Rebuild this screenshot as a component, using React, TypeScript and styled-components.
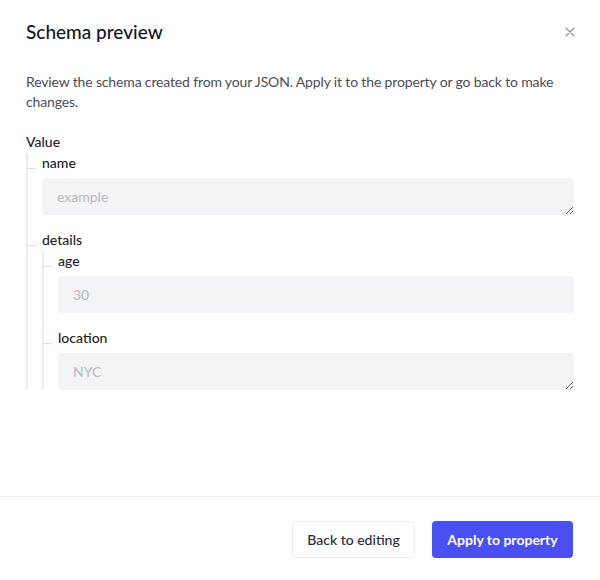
import React from 'react';
import styled, { createGlobalStyle } from 'styled-components';

const GlobalStyle = createGlobalStyle`
  html, body {
    margin: 0;
    padding: 0;
    background: #ffffff;
  }
  body {
    font-family: Lato, "Noto Sans", sans-serif;
    color: #1c1d2b;
  }
`;

type FieldNode = {
  label: string;
  kind?: 'textarea' | 'input';
  placeholder?: string;
  children?: FieldNode[];
};

const schema: FieldNode = {
  label: 'Value',
  children: [
    { label: 'name', kind: 'textarea', placeholder: 'example' },
    {
      label: 'details',
      children: [
        { label: 'age', kind: 'input', placeholder: '30' },
        { label: 'location', kind: 'textarea', placeholder: 'NYC' },
      ],
    },
  ],
};

const TreeItem = ({ node, nested }: { node: FieldNode; nested: boolean }) => (
  <SItem>
    <SLabel $nested={nested}>{node.label}</SLabel>
    {node.kind === 'textarea' && <STextarea placeholder={node.placeholder} readOnly rows={1} />}
    {node.kind === 'input' && <SInput placeholder={node.placeholder} readOnly />}
    {node.children && (
      <SBranch>
        {node.children.map((child) => (
          <TreeItem key={child.label} node={child} nested />
        ))}
      </SBranch>
    )}
  </SItem>
);

const App = () => {
  return (
    <>
      <GlobalStyle />
      <SModal>
        <SHeader>
          <STitle>Schema preview</STitle>
          <SCloseButton aria-label="Close">
            <svg width="10" height="10" viewBox="0 0 10 10">
              <path d="M1 1 L9 9 M9 1 L1 9" stroke="#8e909c" strokeWidth="1.1" strokeLinecap="round" />
            </svg>
          </SCloseButton>
        </SHeader>

        <SBody>
          <SDescription>
            Review the schema created from your JSON. Apply it to the property or go back to make changes.
          </SDescription>
          <STree>
            <TreeItem node={schema} nested={false} />
          </STree>
        </SBody>

        <SFooter>
          <SSecondaryButton>Back to editing</SSecondaryButton>
          <SPrimaryButton>Apply to property</SPrimaryButton>
        </SFooter>
      </SModal>
    </>
  );
};

export default App;

const SModal = styled.div`
  width: 600px;
  height: 580px;
  display: flex;
  flex-direction: column;
  background: #ffffff;
`;

const SHeader = styled.div`
  display: flex;
  align-items: center;
  justify-content: space-between;
  padding: 20px 26px 0 26px;
  height: 24px;
`;

const STitle = styled.h2`
  margin: 0;
  font-size: 19px;
  font-weight: 500;
  line-height: 24px;
  color: #14151f;
`;

const SCloseButton = styled.button`
  background: transparent;
  border: none;
  padding: 0;
  width: 10px;
  height: 10px;
  display: flex;
  margin-right: -1px;
  cursor: pointer;
`;

const SBody = styled.div`
  flex: 1;
  padding: 0 26px;
`;

const SDescription = styled.p`
  margin: 28px 0 0 0;
  font-size: 14px;
  letter-spacing: -0.15px;
  line-height: 20px;
  color: #4b4c58;
`;

const STree = styled.div`
  margin-top: 20px;
`;

const SItem = styled.div`
  display: flex;
  flex-direction: column;

  & + & {
    margin-top: 15px;
  }
`;

const SLabel = styled.div<{ $nested: boolean }>`
  position: relative;
  font-size: 14px;
  line-height: 20px;
  font-weight: 500;
  color: #1c1d2b;

  &::before {
    content: '';
    display: ${(p) => (p.$nested ? 'block' : 'none')};
    position: absolute;
    left: -15px;
    top: 15px;
    width: 9px;
    height: 1px;
    background: #dcdde3;
  }
`;

const SBranch = styled.div`
  display: flex;
  flex-direction: column;
  margin-top: 1px;
  padding-left: 14px;
  border-left: 2px solid #ececf0;
`;

const fieldBase = `
  box-sizing: border-box;
  width: 100%;
  margin-top: 5px;
  border: none;
  border-radius: 4px;
  background: #f4f4f6;
  padding: 9px 15px;
  font-family: Lato, "Noto Sans", sans-serif;
  font-size: 14px;
  line-height: 19px;
  color: #1c1d2b;
  outline: none;

  &::placeholder {
    color: #b7b8c2;
  }
`;

const STextarea = styled.textarea`
  ${fieldBase}
  display: block;
  height: 37px;
  resize: vertical;
`;

const SInput = styled.input`
  ${fieldBase}
  display: block;
  height: 37px;
`;

const SFooter = styled.div`
  display: flex;
  justify-content: flex-end;
  gap: 17px;
  padding: 24px 27px 22px 27px;
  border-top: 1px solid #f1f1f4;
`;

const buttonBase = `
  box-sizing: border-box;
  height: 37px;
  border-radius: 4px;
  font-family: Lato, "Noto Sans", sans-serif;
  font-size: 14px;
  cursor: pointer;
`;

const SSecondaryButton = styled.button`
  ${buttonBase}
  width: 123px;
  background: #ffffff;
  border: 1px solid #ededf1;
  color: #2a2b3a;
  font-weight: 500;
`;

const SPrimaryButton = styled.button`
  ${buttonBase}
  width: 141px;
  background: #4a4ff1;
  border: none;
  color: #ffffff;
  font-weight: 700;
`;
